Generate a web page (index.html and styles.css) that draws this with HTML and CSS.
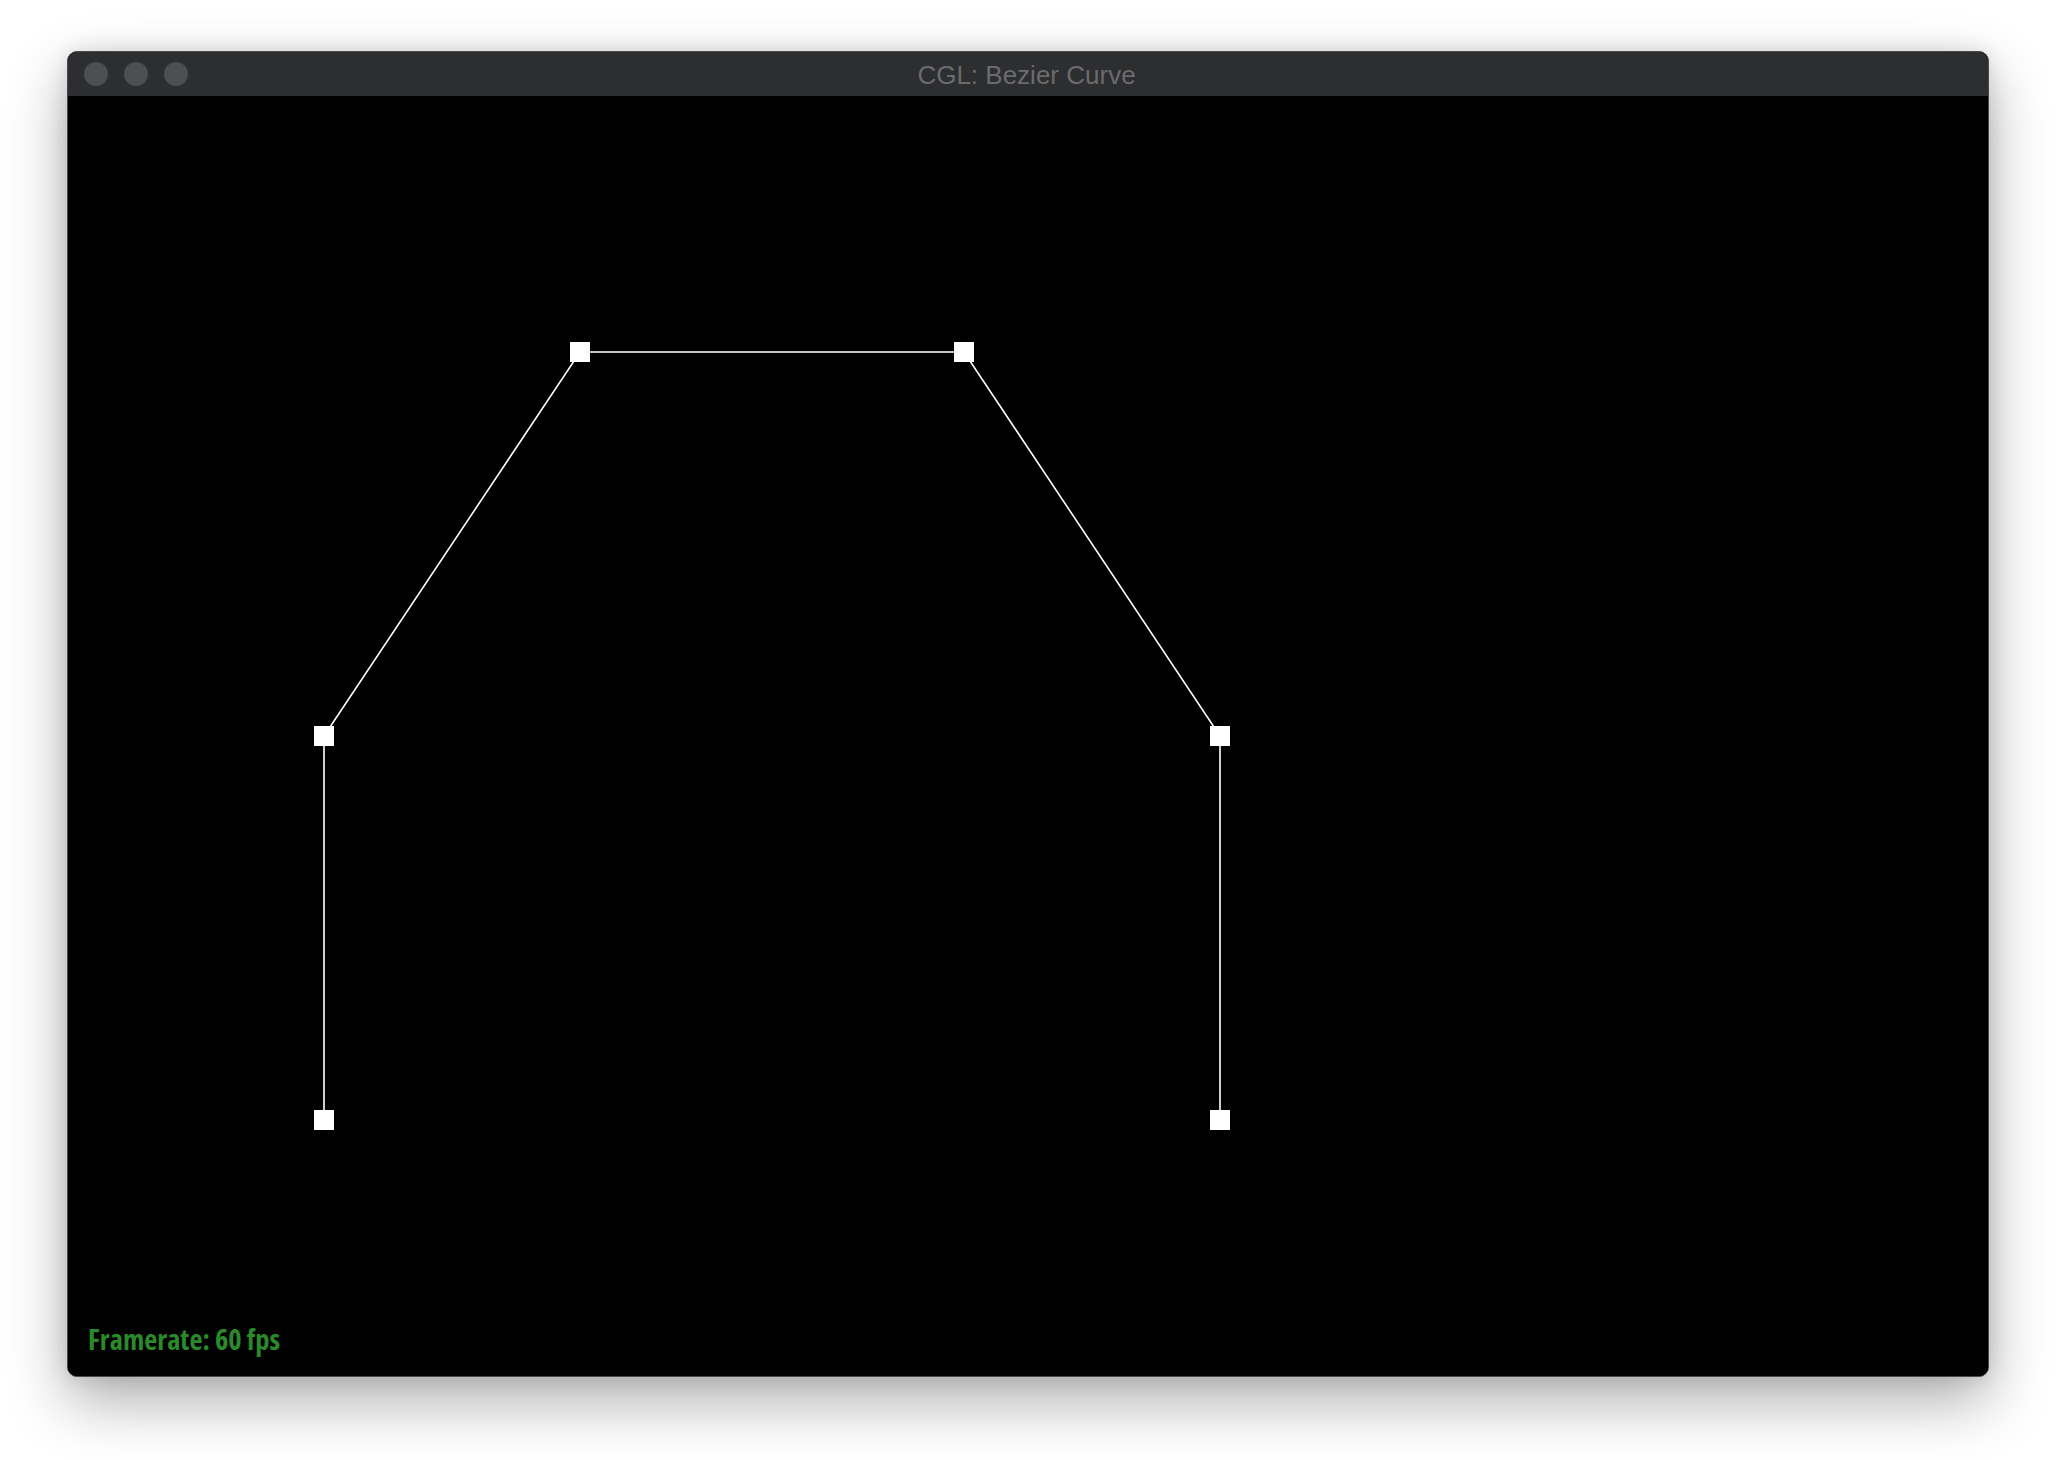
FILE: index.html
```html
<!DOCTYPE html>
<html lang="en">
<head>
<meta charset="utf-8">
<title>CGL: Bezier Curve</title>
<link rel="stylesheet" href="styles.css">
</head>
<body>
<div class="window">
  <div class="titlebar">
    <div class="lights">
      <span class="light"></span>
      <span class="light"></span>
      <span class="light"></span>
    </div>
    <div class="title">CGL: Bezier Curve</div>
  </div>
  <div class="canvas">
    <svg class="scene" width="1920" height="1280" viewBox="0 0 1920 1280">
      <polyline points="256,1024 256,640 512,256 896,256 1152,640 1152,1024" fill="none" stroke="#ffffff" stroke-width="1.6"/>
      <rect x="246" y="630" width="20" height="20" fill="#ffffff"/>
      <rect x="502" y="246" width="20" height="20" fill="#ffffff"/>
      <rect x="886" y="246" width="20" height="20" fill="#ffffff"/>
      <rect x="1142" y="630" width="20" height="20" fill="#ffffff"/>
      <rect x="246" y="1014" width="20" height="20" fill="#ffffff"/>
      <rect x="1142" y="1014" width="20" height="20" fill="#ffffff"/>
    </svg>
    <div class="fps">Framerate: 60 fps</div>
  </div>
</div>
</body>
</html>
```
FILE: styles.css
```css
html, body {
  margin: 0;
  padding: 0;
  background: #ffffff;
}
body {
  width: 2056px;
  height: 1460px;
  overflow: hidden;
  display: flex;
  align-items: flex-start;
}
.window {
  margin: 51px 0 0 67px;
  width: 1920px;
  border: 1px solid #4a4a4c;
  border-radius: 10px;
  overflow: hidden;
  background: #000;
  box-shadow: 0 24px 60px rgba(0, 0, 0, 0.32), 0 0 20px rgba(0, 0, 0, 0.12);
  display: flex;
  flex-direction: column;
}
.titlebar {
  position: relative;
  height: 44px;
  background: #2d2e30;
  display: flex;
  align-items: center;
  justify-content: center;
}
.lights {
  position: absolute;
  left: 16px;
  top: 10px;
  display: flex;
  gap: 16px;
}
.light {
  width: 24px;
  height: 24px;
  border-radius: 50%;
  background: #4e4f51;
}
.title {
  font-family: "Liberation Sans", Arial, sans-serif;
  font-size: 26px;
  color: #6b6b6d;
  line-height: 44px;
  padding-top: 2px;
  padding-right: 3px;
}
.canvas {
  position: relative;
  height: 1280px;
  background: #000;
}
.scene {
  display: block;
}
.fps {
  position: absolute;
  left: 20px;
  bottom: 23px;
  font-family: "Open Sans", "Liberation Sans Narrow", sans-serif;
  font-stretch: 75%;
  font-weight: 700;
  font-size: 28.5px;
  line-height: 1;
  color: #2a8a2a;
}
```
